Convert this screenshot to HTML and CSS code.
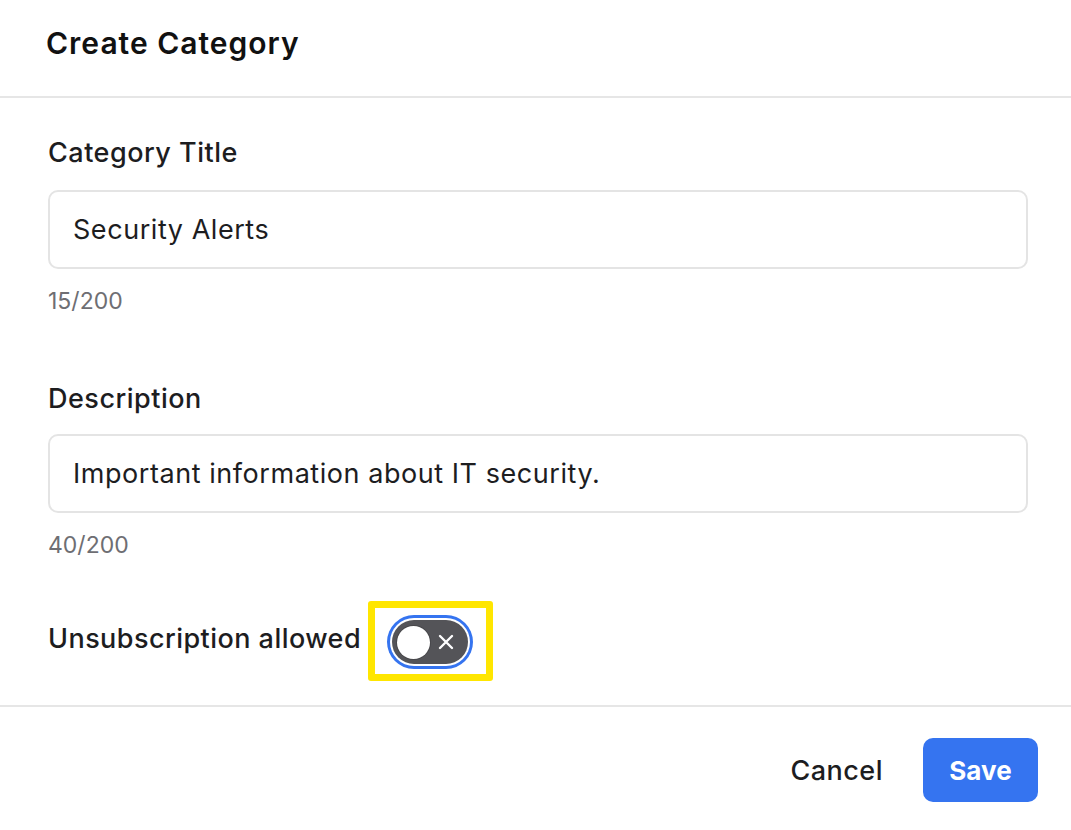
FILE: index.html
```html
<!DOCTYPE html>
<html lang="en">
<head>
<meta charset="utf-8">
<title>Create Category</title>
<link rel="stylesheet" href="styles.css">
</head>
<body>
<div class="dialog">
  <header class="dialog-header">
    <h1 class="dialog-title">Create Category</h1>
  </header>
  <main class="dialog-body">
    <div class="field">
      <label class="field-label" for="title">Category Title</label>
      <div class="field-input">Security Alerts</div>
      <div class="field-counter">15/200</div>
    </div>
    <div class="field">
      <label class="field-label" for="desc">Description</label>
      <div class="field-input">Important information about IT security.</div>
      <div class="field-counter">40/200</div>
    </div>
    <div class="toggle-row">
      <span class="toggle-label">Unsubscription allowed</span>
      <span class="highlight">
        <span class="toggle">
          <span class="toggle-knob"></span>
          <svg class="toggle-x" viewBox="0 0 16 16" width="16" height="16" aria-hidden="true">
            <path d="M2 2 L14 14 M14 2 L2 14" stroke="#ffffff" stroke-width="2.4" stroke-linecap="round" fill="none"/>
          </svg>
        </span>
      </span>
    </div>
  </main>
  <footer class="dialog-footer">
    <button class="btn btn-cancel">Cancel</button>
    <button class="btn btn-save">Save</button>
  </footer>
</div>
</body>
</html>
```

FILE: styles.css
```css
* { box-sizing: border-box; }
html, body {
  margin: 0;
  padding: 0;
  background: #ffffff;
}
body {
  font-family: Inter, "Noto Sans", "Liberation Sans", sans-serif;
  color: #1d1d1f;
  width: 1071px;
  height: 830px;
  overflow: hidden;
}
.dialog {
  display: flex;
  flex-direction: column;
  height: 830px;
}
.dialog-header {
  padding: 26px 46px 36px;
  border-bottom: 2px solid #e6e6e6;
}
.dialog-title {
  margin: 0;
  font-size: 30px;
  line-height: 34px;
  font-weight: 600;
  letter-spacing: 1px;
  color: #111111;
}
.dialog-body {
  padding: 39px 43px 0 48px;
  display: flex;
  flex-direction: column;
  flex: 1;
}
.field {
  display: flex;
  flex-direction: column;
  margin-bottom: 67px;
}
.field + .field { margin-bottom: 41px; }
.field + .field .field-input { margin-top: 19px; }
.field-label {
  font-size: 27px;
  line-height: 32px;
  font-weight: 500;
  letter-spacing: 0.5px;
  color: #1d1d1f;
}
.field-input {
  margin-top: 21px;
  height: 79px;
  border: 2px solid #e4e4e4;
  border-radius: 10px;
  padding: 0 23px;
  display: flex;
  align-items: center;
  font-size: 27px;
  letter-spacing: 0.55px;
  color: #1d1d1f;
}
.field-counter {
  margin-top: 17px;
  font-size: 23px;
  line-height: 30px;
  color: #6e6e73;
}
.toggle-row {
  display: flex;
  align-items: center;
  gap: 7px;
}
.toggle-label {
  font-size: 27px;
  line-height: 32px;
  font-weight: 500;
  letter-spacing: 0.45px;
  color: #1d1d1f;
  margin-top: -4px;
}
.highlight {
  display: inline-flex;
  border: 7px solid #ffe600;
  border-radius: 3px;
  padding: 12px 18px 10px 17px;
}
.toggle {
  position: relative;
  display: inline-flex;
  align-items: center;
  width: 76px;
  height: 44px;
  border-radius: 22px;
  background: #545458;
  box-shadow: 0 0 0 2px #ffffff, 0 0 0 5px #3574f0;
  padding: 0 5px;
}
.toggle-knob {
  width: 33px;
  height: 33px;
  border-radius: 50%;
  background: #ffffff;
  box-shadow: 0 0 0 1px rgba(0,0,0,0.15);
}
.toggle-x {
  margin-left: 8px;
}
.dialog-footer {
  border-top: 2px solid #e6e6e6;
  display: flex;
  justify-content: flex-end;
  align-items: center;
  padding: 31px 33px 28px;
  gap: 20px;
}
.btn {
  font-family: inherit;
  font-size: 26px;
  height: 64px;
  border: none;
  border-radius: 10px;
  cursor: pointer;
}
.btn-cancel {
  background: transparent;
  color: #1d1d1f;
  font-size: 27px;
  letter-spacing: 0.5px;
  font-weight: 500;
  padding: 0 20px;
}
.btn-save {
  background: #3574f0;
  color: #ffffff;
  font-weight: 700;
  padding: 0 26px;
  width: 115px;
}
```
